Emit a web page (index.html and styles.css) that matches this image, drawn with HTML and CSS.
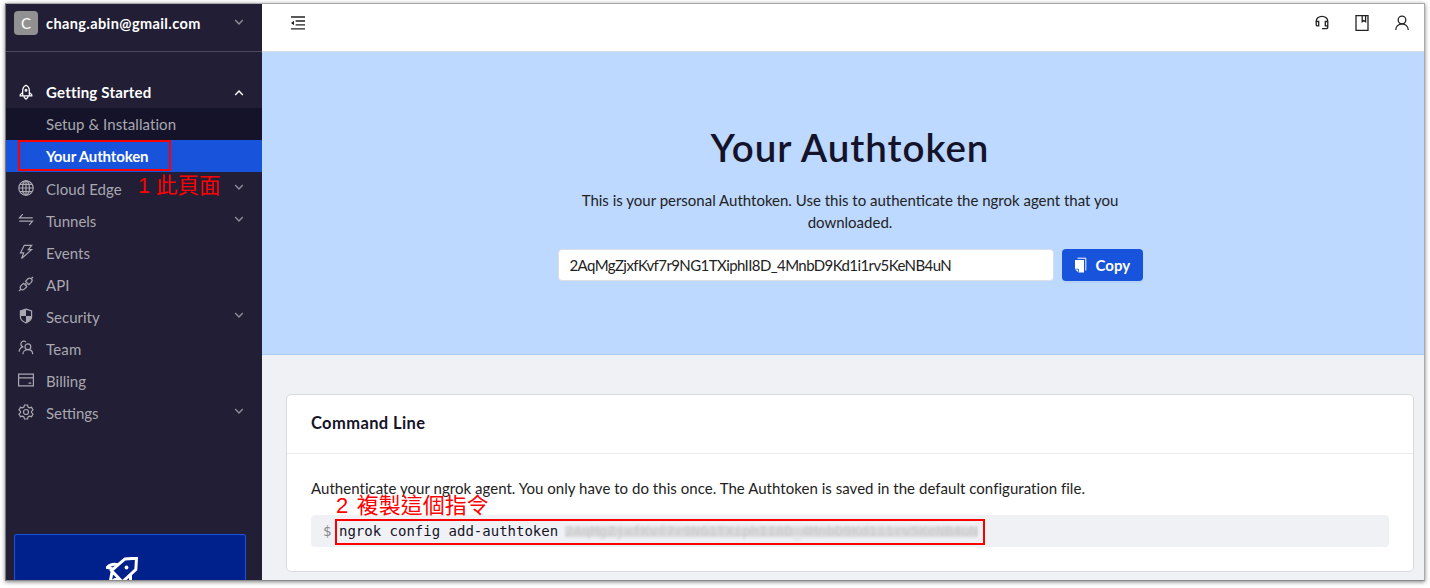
FILE: index.html
```html
<!DOCTYPE html>
<html lang="en">
<head>
<meta charset="utf-8">
<title>Your Authtoken</title>
<link rel="stylesheet" href="styles.css">
</head>
<body>
<div class="window">
  <aside class="sidebar">
    <div class="account">
      <span class="avatar">C</span>
      <span class="email">chang.abin@gmail.com</span>
      <svg class="chev" viewBox="0 0 10 10"><path d="M1.2 3 5 7 8.8 3"/></svg>
    </div>
    <nav class="menu">
      <div class="item open">
        <svg class="ico" viewBox="0 0 16 16"><path d="M4.700 11.800V6C4.700 3.600 6.400 2 8 1.200c1.600.8 3.300 2.400 3.300 4.800v5.800zM4.700 8.300 2.200 10.800v1h2.500M11.300 8.300 13.800 10.800v1h-2.500M5.800 11.800c0 1.900 1.200 2.800 2.200 3.300 1-.5 2.200-1.400 2.200-3.300"/><circle cx="8" cy="6.300" r=".9"/></svg>
        <span class="label w-started">Getting Started</span>
        <svg class="chev" viewBox="0 0 10 10"><path d="M1.2 7 5 3 8.800 7"/></svg>
      </div>
      <div class="sub"><span class="label w-setup">Setup &amp; Installation</span></div>
      <div class="sub active"><span class="label w-auth">Your Authtoken</span><span class="mark-box"></span></div>
      <div class="item">
        <svg class="ico" viewBox="0 0 16 16"><circle cx="8" cy="8" r="7.200"/><ellipse cx="8" cy="8" rx="3.500" ry="7.200"/><path d="M8 .8v14.400M.8 8h14.400M2 4.400h12M2 11.600h12"/></svg>
        <span class="label w-setup">Cloud Edge</span>
        <svg class="chev" viewBox="0 0 10 10"><path d="M1.200 3 5 7 8.800 3"/></svg>
        <span class="note note-one">1 此頁面</span>
      </div>
      <div class="item">
        <svg class="ico" viewBox="0 0 16 16"><path d="M14.700 5.800H1.500L4.800 2.100M1.300 9.200h13.200l-3.300 3.900"/></svg>
        <span class="label">Tunnels</span>
        <svg class="chev" viewBox="0 0 10 10"><path d="M1.200 3 5 7 8.800 3"/></svg>
      </div>
      <div class="item">
        <svg class="ico" viewBox="0 0 16 16"><path d="M6.300 1.300h7.400L10.300 5.700h3.200L3.600 14.500 5.700 8.800H2.500z"/></svg>
        <span class="label">Events</span>
      </div>
      <div class="item">
        <svg class="ico" viewBox="0 0 16 16"><path d="M7.500 5.300 9.700 3c1.200-1.200 2.700-1.100 3.700-.3.900 1 .9 2.500-.2 3.700l-2.300 2.200zM5.500 7.400l3.300 3.300-2.200 2.200c-1.200 1.200-2.800 1.200-3.700.2-.9-1-.8-2.500.3-3.600zM13.300 2.700 15 1M2.700 13.300 1 15M6.600 8.500 8 7.100M7.800 9.600l1.300-1.300"/></svg>
        <span class="label">API</span>
      </div>
      <div class="item">
        <svg class="ico" viewBox="0 0 16 16"><path d="M8 1.100 13.600 3v6.100c0 2.400-2.300 4.500-5.600 5.900-3.300-1.400-5.600-3.500-5.600-5.900V3z"/><path class="solid" d="M8 1.100 13.600 3v4.900H8zM8 7.900V15C4.700 13.600 2.400 11.500 2.400 9.100V7.900z" transform="matrix(-1 0 0 1 16 0)"/></svg>
        <span class="label">Security</span>
        <svg class="chev" viewBox="0 0 10 10"><path d="M1.200 3 5 7 8.800 3"/></svg>
      </div>
      <div class="item">
        <svg class="ico" viewBox="0 0 16 16"><circle cx="9.900" cy="6.700" r="2.900"/><path d="M4.900 14.300c0-2.800 2.200-4.700 5-4.700s4.800 1.900 4.800 4.700M7.900 2.100C7.200 1.400 6.600 1.200 5.700 1.200 4 1.200 2.900 2.500 2.900 4.100c0 1.500 1 2.700 2.600 2.900M1.200 11.800C1.200 9.400 2.500 7.700 4.400 7.100"/></svg>
        <span class="label w-team">Team</span>
      </div>
      <div class="item">
        <svg class="ico" viewBox="0 0 16 16"><path d="M.6 2.200h14.800v11.600H.6zM.6 5.800h14.800M10.500 11.200h2.800"/></svg>
        <span class="label">Billing</span>
      </div>
      <div class="item">
        <svg class="ico" viewBox="0 0 16 16"><circle cx="8" cy="8" r="2.500"/><path d="M6.500 1h3l.6 2 1.300.8 2.100-.5L15 5.900l-1.500 1.500v1.200l1.500 1.500-1.500 2.600-2.100-.5-1.300.8-.6 2h-3l-.6-2-1.300-.8-2.100.5L1 10.100l1.500-1.500V7.400L1 5.900l1.500-2.600 2.100.5L5.900 3z"/></svg>
        <span class="label">Settings</span>
        <svg class="chev" viewBox="0 0 10 10"><path d="M1.200 3 5 7 8.800 3"/></svg>
      </div>
    </nav>
    <div class="promo">
      <svg class="rocket" viewBox="0 0 34 34"><path d="M12 7.800 19 1.900 30.500 1.200 29.800 12.500 16.300 25 5.500 13.500zM12 7.800C7.500 6.600 3.500 8 1.200 10.500l5 1M6.500 12.500 4 26l8-5.500M24.500 18.500v8L18 32"/><circle cx="20.500" cy="10.500" r="1.900"/></svg>
    </div>
  </aside>
  <main class="main">
    <header class="topbar">
      <svg class="tool" viewBox="0 0 16 16"><path d="M1 2h14M5.600 6h9.400M5.600 9.800h9.400M1 13.900h14"/><path class="solid" d="M1 8 4 5.700v4.600z"/></svg>
      <div class="tools">
        <svg class="tool" viewBox="0 0 16 16"><path d="M2.200 7.200V6.500C2.200 3.300 4.700 1.400 8 1.400s5.800 1.900 5.800 5.100v5.200c0 1.300-.8 2-2 2H8M2.200 6.500h2.500v4.300H3.200c-.8 0-1-.4-1-1zM13.800 6.500h-2.500v4.300h1.500c.8 0 1-.4 1-1z"/></svg>
        <svg class="tool" viewBox="0 0 16 16"><path d="M2 .7h12v14.600H2zM8.200.7v6l1.700-1.200 1.700 1.200v-6"/></svg>
        <svg class="tool" viewBox="0 0 16 16"><circle cx="8" cy="5" r="3.800"/><path d="M1.700 15.100C1.700 11.500 4.500 8.800 8 8.800s6.300 2.700 6.300 6.300"/></svg>
      </div>
    </header>
    <section class="hero">
      <h1 class="title">Your Authtoken</h1>
      <p class="lead">This is your personal Authtoken. Use this to authenticate the ngrok agent that you<br>downloaded.</p>
      <div class="token-row">
        <div class="token">2AqMgZjxfKvf7r9NG1TXiphII8D_4MnbD9Kd1i1rv5KeNB4uN</div>
        <button class="copy"><svg class="copy-ico" viewBox="0 0 14 16"><path class="page" d="M1 3h9v12.500H4.500L1 12.200z"/><path class="fold-line" d="M1.200 12.200h3.300v3.200"/><path class="back" d="M3.500 1.200h8.300v12.300"/></svg><span>Copy</span></button>
      </div>
    </section>
    <section class="content">
      <div class="card">
        <h2 class="card-head">Command Line</h2>
        <div class="card-body">
          <p class="desc">Authenticate your ngrok agent. You only have to do this once. The Authtoken is saved in the default configuration file.</p>
          <div class="code">
            <span class="note note-two">2 複製這個指令</span>
            <span class="prompt">$</span><span class="command">ngrok config add-authtoken</span><span class="secret">2AqMgZjxfKvf7r9NG1TXiphII8D_4MnbD9Kd1i1rv5KeNB4uN</span>
            <span class="mark-code"></span>
          </div>
        </div>
      </div>
    </section>
  </main>
</div>
</body>
</html>
```
FILE: styles.css
```css
* { box-sizing: border-box; }
body {
  margin: 0;
  width: 1430px;
  height: 588px;
  overflow: hidden;
  background: #fff;
  padding: 3px 0 0 5px;
  font-family: Lato, "Liberation Sans", sans-serif;
  font-size: 15px;
  color: #222;
}
h1, h2, p { margin: 0; }
.window {
  display: flex;
  width: 1420px;
  height: 578px;
  overflow: hidden;
  border: 1px solid #a9a9ab;
  border-left-color: #77767d;
  border-bottom-color: #8c8c8e;
  box-shadow: 0 1px 4px rgba(0, 0, 0, .5);
}
svg { fill: none; stroke: currentColor; stroke-width: 1.2; flex: none; }
.solid { fill: currentColor; stroke: none; }

.sidebar {
  display: flex;
  flex-direction: column;
  flex: none;
  width: 256px;
  background: #211e35;
  color: #a9a8b0;
}
.account {
  display: flex;
  flex: none;
  align-items: center;
  height: 48px;
  padding: 0 18px 9px 8px;
  border-bottom: 1px solid #4c4a5c;
  color: #fff;
}
.avatar {
  width: 24px;
  height: 24px;
  margin-right: 8px;
  border-radius: 4px;
  background: #919191;
  font-size: 15px;
  line-height: 24px;
  text-align: center;
}
.email { flex: 1; font-weight: 700; font-size: 14.5px; letter-spacing: .4px; white-space: nowrap; }
.chev { width: 10px; height: 10px; margin: -3px 0 0 auto; stroke-width: 1.4; color: #8f8e9a; }
.menu { flex: none; padding-top: 25px; }
.item, .sub { position: relative; display: flex; align-items: center; height: 32px; white-space: nowrap; }
.item { padding: 0 18px 0 12px; }
.item .label { padding-top: 1px; }
.item.open { height: 31px; }
.item.open .label { padding: 0 0 1px; }
.ico { width: 16px; height: 16px; margin: -1px 12px 0 0; }
.open { color: #fff; font-weight: 700; }
.open .chev { color: #fff; margin-top: 0; }
.w-started { letter-spacing: .2px; }
.w-auth { letter-spacing: -.15px; }
.w-team { letter-spacing: .2px; }
.w-setup { letter-spacing: .08px; }
.sub { padding: 0 0 1px 40px; background: #151329; }
.active { background: #1853db; color: #fff; font-weight: 700; }
.mark-box { position: absolute; left: 12px; top: 0; width: 153px; height: 31px; border: 2px solid #f00; }
.note { position: absolute; color: #f00; font-family: "Liberation Sans", "Noto Sans CJK TC", sans-serif; white-space: nowrap; font-weight: 400; }
.note-one { left: 132px; top: -2px; font-size: 21.5px; line-height: 32px; }
.promo {
  display: flex;
  flex: none;
  justify-content: center;
  height: 100px;
  margin: 106px 16px 0 8px;
  padding-top: 22px;
  border: 1px solid #1853db;
  border-radius: 2px;
  background: #00218b;
  color: #fff;
}
.rocket { width: 34px; height: 34px; margin-right: 14px; stroke-width: 3; }
.rocket circle { fill: #fff; stroke: none; }

.main { flex: 1; display: flex; flex-direction: column; min-width: 0; background: #f0f1f5; }
.topbar {
  display: flex;
  justify-content: space-between;
  height: 48px;
  padding: 11px 14px 0 28px;
  background: #fff;
  border-bottom: 1px solid #d8dce4;
  color: #222;
}
.tools { display: flex; gap: 24px; }
.tool { width: 16px; height: 16px; stroke-width: 1.3; }
.hero {
  display: flex;
  flex-direction: column;
  align-items: center;
  height: 303px;
  padding: 67px 0 0 14px;
  border-bottom: 1px solid #a9cbf7;
  background: #bdd9ff;
}
.title { font-size: 38.5px; line-height: 56px; font-weight: 600; color: #151329; letter-spacing: .95px; white-space: nowrap; }
.lead { margin-top: 14px; line-height: 22px; text-align: center; white-space: nowrap; }
.token-row { display: flex; gap: 8px; margin-top: 16px; }
.token {
  width: 496px;
  height: 32px;
  padding: 0 11px;
  border: 1px solid #dcdfe5;
  border-radius: 4px;
  background: #fff;
  line-height: 30px;
  letter-spacing: -.59px;
  white-space: nowrap;
}
.copy {
  display: flex;
  align-items: center;
  width: 81px;
  height: 32px;
  padding: 0 0 0 12px;
  border: 0;
  border-radius: 4px;
  background: #1853db;
  box-shadow: 0 2px 1px rgba(0, 0, 0, .04);
  color: #fff;
  font: 700 15px Lato, sans-serif;
}
.copy-ico { width: 14px; height: 16px; margin-right: 8px; }
.page { fill: #fff; stroke: none; }
.back { stroke-width: 1; }
.fold-line { stroke: #1853db; stroke-width: .8; }
.content { padding: 39px 10px 0 24px; }
.card { height: 178px; border: 1px solid #d9dadf; border-radius: 5px; background: #fff; }
.card-head { height: 59px; padding: 0 24px; border-bottom: 1px solid #ececf0; font-size: 16.5px; font-weight: 700; letter-spacing: .38px; line-height: 57px; color: #151329; white-space: nowrap; }
.card-body { padding: 23px 24px 0; }
.desc { line-height: 22px; letter-spacing: .035px; white-space: nowrap; }
.code {
  position: relative;
  display: flex;
  align-items: center;
  height: 32px;
  margin-top: 16px;
  padding-left: 12px;
  border-radius: 4px;
  background: #f0f1f5;
  color: #151329;
  font: 14px "DejaVu Sans Mono", "Liberation Mono", monospace;
  white-space: pre;
}
.prompt { width: 16px; color: #898991; }
.secret {
  margin-left: 7px;
  background: linear-gradient(transparent 2px, #d9d9db 5px, #d9d9db 13px, transparent 15px);
  color: #cdcdd0;
  filter: blur(.8px);
}
.mark-code { position: absolute; left: 24px; top: 4px; width: 650px; height: 26px; border: 2px solid #f00; }
.note-two { left: 25px; top: -25px; font-size: 22px; line-height: 32px; word-spacing: 2.5px; }
```
